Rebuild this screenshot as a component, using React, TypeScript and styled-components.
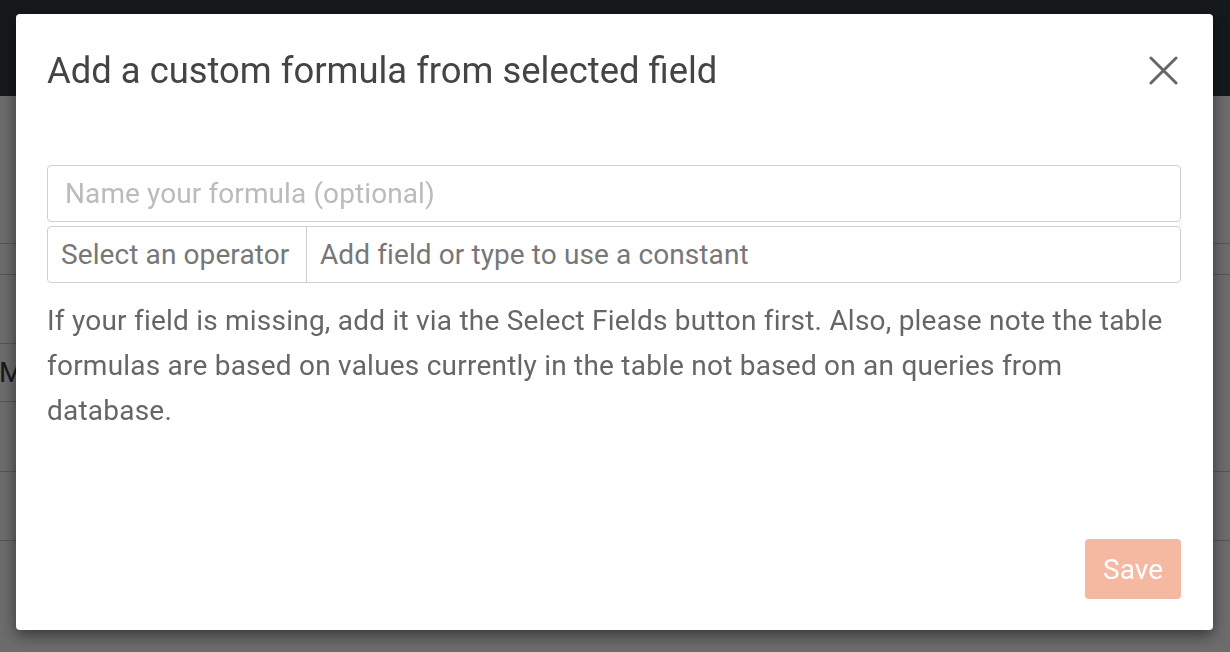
import React from "react";
import styled, { createGlobalStyle } from "styled-components";

const GlobalStyle = createGlobalStyle`
  html, body {
    margin: 0;
    padding: 0;
    height: 100%;
    overflow: hidden;
    background: #d8d8d8;
    font-family: Roboto, "Liberation Sans", Arial, sans-serif;
  }
`;

// background table rows behind the backdrop
const rows = [
  { height: 30, text: "", partial: false },
  { height: 68, text: "", partial: true },
  { height: 57, text: "M", partial: true },
  { height: 69, text: "", partial: false },
  { height: 68, text: "", partial: false },
];

const App = () => {
  return (
    <>
      <GlobalStyle />
      <Page>
        <TopBar />
        <Toolbar />
        <Table>
          {rows.map((r, i) => (
            <Row key={i} $h={r.height} $partial={r.partial}>
              <Cell $partial={r.partial}>{r.text}</Cell>
            </Row>
          ))}
        </Table>
      </Page>
      <Backdrop>
        <Modal>
          <Header>
            <Title>Add a custom formula from selected field</Title>
            <CloseButton aria-label="Close">
              <svg width="30" height="30" viewBox="0 0 30 30">
                <path
                  d="M2 2 L28 28 M28 2 L2 28"
                  stroke="#666"
                  strokeWidth="3"
                  strokeLinecap="round"
                />
              </svg>
            </CloseButton>
          </Header>
          <Body>
            <NameInput placeholder="Name your formula (optional)" />
            <FormulaRow>
              <Operator>Select an operator</Operator>
              <ValueInput placeholder="Add field or type to use a constant" />
            </FormulaRow>
            <Note>
              If your field is missing, add it via the Select Fields button first. Also, please note the table
              formulas are based on values currently in the table not based on an queries from database.
            </Note>
          </Body>
          <Footer>
            <SaveButton disabled>Save</SaveButton>
          </Footer>
        </Modal>
      </Backdrop>
    </>
  );
};

export default App;

const Page = styled.div`
  width: 100%;
  height: 652px;
  background: #d8d8d8;
`;

const TopBar = styled.div`
  height: 96px;
  background: #2c3238;
`;

const Toolbar = styled.div`
  height: 147px;
  border-bottom: 1px solid #aaa;
`;

const Table = styled.div`
  display: flex;
  flex-direction: column;
`;

const Row = styled.div<{ $h: number; $partial: boolean }>`
  height: ${(p) => p.$h}px;
  border-bottom: 1px solid ${(p) => (p.$partial ? "transparent" : "#aaa")};
  display: flex;
`;

const Cell = styled.div<{ $partial: boolean }>`
  width: 200px;
  border-bottom: 1px solid ${(p) => (p.$partial ? "#aaa" : "transparent")};
  margin-bottom: -1px;
  display: flex;
  align-items: center;
  text-indent: -1px;
  font-size: 28px;
  color: #333;
`;

const Backdrop = styled.div`
  position: fixed;
  inset: 0;
  background: rgba(0, 0, 0, 0.5);
`;

const Modal = styled.div`
  position: absolute;
  top: 14px;
  left: 16px;
  width: 1197px;
  height: 616px;
  box-sizing: border-box;
  background: #fff;
  border-radius: 4px;
  box-shadow: 0 5px 15px rgba(0, 0, 0, 0.5);
  padding: 0 32px 31px 31px;
  display: flex;
  flex-direction: column;
`;

const Header = styled.div`
  display: flex;
  align-items: center;
  justify-content: space-between;
  padding-top: 35px;
  height: 43px;
`;

const Title = styled.h4`
  margin: 0;
  font-size: 36.4px;
  line-height: 43px;
  font-weight: 400;
  color: #444;
`;

const CloseButton = styled.button`
  border: 0;
  background: none;
  padding: 0;
  margin-right: 3px;
  width: 29px;
  height: 29px;
  display: flex;
  cursor: pointer;

  svg {
    width: 29px;
    height: 29px;
  }
`;

const Body = styled.div`
  margin-top: 73px;
  display: flex;
  flex-direction: column;
`;

const fieldBase = `
  box-sizing: border-box;
  height: 57px;
  border: 1px solid #cdd1d1;
  border-radius: 4px;
  font-family: Roboto, "Liberation Sans", Arial, sans-serif;
  font-size: 28px;
  letter-spacing: 0.1px;
  color: #777;
  background: #fff;
`;

const NameInput = styled.input`
  ${fieldBase}
  width: 100%;
  padding: 0 17px;
  outline: none;
  &::placeholder {
    color: #bbb;
  }
`;

const FormulaRow = styled.div`
  ${fieldBase}
  margin-top: 4px;
  display: flex;
  align-items: stretch;
`;

const Operator = styled.div`
  width: 259px;
  box-sizing: border-box;
  padding-left: 13px;
  border-right: 1px solid #cdd1d1;
  display: flex;
  align-items: center;
  color: #777;
`;

const ValueInput = styled.input`
  flex: 1;
  border: 0;
  background: none;
  outline: none;
  padding: 0 13px;
  font-family: inherit;
  font-size: 28px;
  letter-spacing: 0.1px;
  color: #777;
  &::placeholder {
    color: #777;
  }
`;

const Note = styled.p`
  margin: 15px 0 0;
  font-size: 28px;
  letter-spacing: 0.22px;
  line-height: 45px;
  color: #666;
`;

const Footer = styled.div`
  margin-top: auto;
  display: flex;
  justify-content: flex-end;
`;

const SaveButton = styled.button`
  height: 60px;
  padding: 0 18px;
  border: 0;
  border-radius: 4px;
  background: #f5b8a0;
  color: #fff;
  font-family: Roboto, "Liberation Sans", Arial, sans-serif;
  font-size: 28px;
`;
